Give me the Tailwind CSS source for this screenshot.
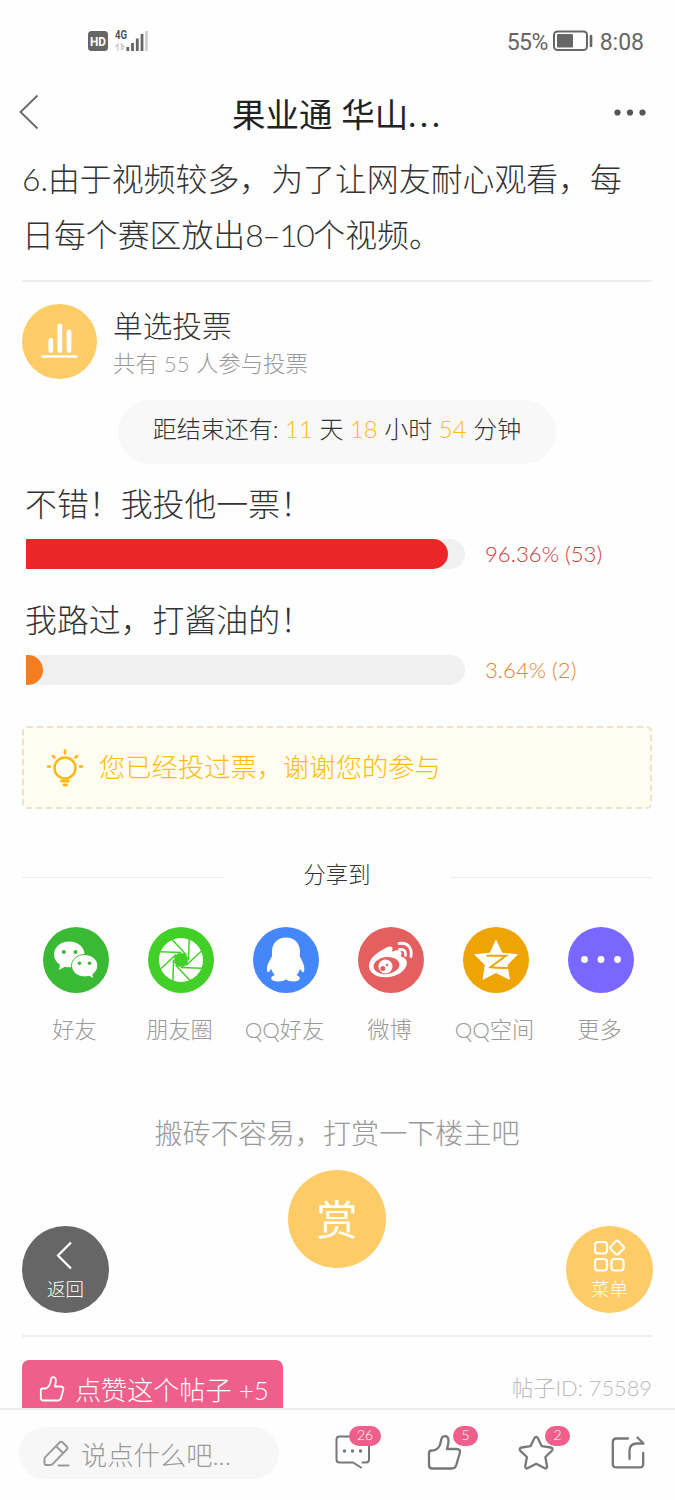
<!DOCTYPE html>
<html lang="zh-CN">
<head>
<meta charset="utf-8">
<meta name="viewport" content="width=device-width, initial-scale=1">
<title>果业通 华山</title>
<script src="https://cdn.jsdelivr.net/npm/@tailwindcss/browser@4"></script>
</head>
<body class="bg-[#fefefe]">
<div class="relative flex h-[1500px] w-[675px] flex-col overflow-hidden bg-[#fefefe] font-['Lato','Noto_Sans_CJK_SC',sans-serif] font-light text-[#333] whitespace-nowrap">

  <!-- status bar -->
  <div class="flex h-[82px] shrink-0 items-center justify-between pl-[87px] pr-[31px] text-[#666]">
    <svg class="h-[24px] w-[64px]" viewBox="87 29 64 24">
      <rect x="88" y="31" width="20" height="20" rx="3.5" fill="#666"/>
      <text x="98" y="46" text-anchor="middle" font-family="Roboto" font-weight="700" font-size="13" fill="#fff" textLength="16" lengthAdjust="spacingAndGlyphs">HD</text>
      <text x="115" y="39.200" font-family="Roboto" font-weight="700" font-size="12" fill="#555" textLength="12" lengthAdjust="spacingAndGlyphs">4G</text>
      <path d="M115.500 47l2.500-3v7M121.500 43v7M121.500 44l2.500 3-2.500 3" fill="none" stroke="#ccc" stroke-width="1.300"/>
      <path d="M127.800 47v4M132.500 43v8M137.300 38.500v12.500M142 34v17" stroke="#666" stroke-width="2.800"/>
      <path d="M146.500 31v20" stroke="#d0d0d0" stroke-width="2.800"/>
    </svg>
    <div class="flex items-center font-['Roboto',sans-serif] text-[23px] font-normal leading-none">
      <span class="mt-[2px] tracking-[-0.6px]">55%</span>
      <svg class="ml-[5px] h-[22px] w-[40px]" viewBox="553 30 40 22">
        <rect x="554" y="31.500" width="33" height="18.500" rx="3.500" fill="none" stroke="#666" stroke-width="2"/>
        <rect x="557" y="34" width="16" height="13.500" rx="1" fill="#666"/>
        <path d="M591 36v10" stroke="#666" stroke-width="2.600" stroke-linecap="round"/>
      </svg>
      <span class="ml-[7px] mt-[2px]">8:08</span>
    </div>
  </div>

  <!-- title bar -->
  <header class="flex h-[69px] shrink-0 items-start justify-between pl-[18px] pr-[28px]">
    <svg class="mt-[12px] h-[36px] w-[36px]" viewBox="18 94 36 36"><path d="M37.500 95.500L20.500 112l17 16.500" fill="none" stroke="#666" stroke-width="1.800"/></svg>
    <h1 class="ml-[9px] mt-[7px] text-[33.500px] font-normal leading-[50px] text-[#222]">果业通 华山<span class="tracking-[4px]">...</span></h1>
    <svg class="mt-[25px] h-[10px] w-[34px]" viewBox="613 107 34 10" fill="#555"><circle cx="617.500" cy="112.500" r="3.100"/><circle cx="630" cy="112.500" r="3.100"/><circle cx="642.500" cy="112.500" r="3.100"/></svg>
  </header>

  <main class="flex h-[1257px] shrink-0 flex-col overflow-hidden pl-[22px] pr-[23px]">
    <p class="h-[129px] shrink-0 text-[31.900px] leading-[56px]">6.由于视频较多，为了让网友耐心观看，每<br>日每个赛区放出<span class="tracking-[-1.5px]">8–10</span>个视频。</p>
    <div class="h-[2px] shrink-0 bg-[#eee]"></div>

    <!-- vote heading -->
    <div class="mt-[22px] flex h-[75px] shrink-0">
      <svg class="h-[75px] w-[75px]" viewBox="22.500 304.500 75 75"><circle cx="60" cy="342" r="37.500" fill="#fdcc66"/><path d="M43 357h34" stroke="#fff" stroke-width="2.600" stroke-linecap="round"/><path d="M51.300 341v10M60.300 326.500v24.500M69.500 332.500v18.500" stroke="#fff" stroke-width="4.800" stroke-linecap="round"/></svg>
      <div class="ml-[16px]">
        <div class="mt-[2px] text-[29.700px] leading-[40px]">单选投票</div>
        <div class="mt-[3px] text-[22.400px] leading-[30px] text-[#999]">共有 55 人参与投票</div>
      </div>
    </div>
    <div class="mt-[21px] flex h-[64px] w-[438px] shrink-0 justify-center self-center rounded-full bg-[#f8f8f8] text-[24px] leading-[58px]">
      <span>距结束还有: <b class="font-light text-[#fb1]">11</b> 天 <b class="font-light text-[#fb1]">18</b> 小时 <b class="font-light text-[#fb1]">54</b> 分钟</span>
    </div>

    <!-- poll options -->
    <div class="mt-[15px] h-[60px] shrink-0 pl-[3px] text-[31.900px] leading-[50px]">不错！我投他一票！</div>
    <div class="flex h-[30px] shrink-0 items-center pl-[4px]">
      <div class="h-[30px] w-[439px] overflow-hidden rounded-r-full bg-[#f0f0f0]"><div class="h-full rounded-r-full bg-[#ea2726]" style="width:96.2%"></div></div>
      <span class="ml-[20px] text-[22.200px] leading-[30px] text-[#cf3838]">96.36% (53)</span>
    </div>
    <div class="mt-[26px] h-[60px] shrink-0 pl-[3px] text-[31.900px] leading-[50px]">我路过，打酱油的！</div>
    <div class="flex h-[30px] shrink-0 items-center pl-[4px]">
      <div class="h-[30px] w-[439px] overflow-hidden rounded-r-full bg-[#f0f0f0]"><div class="h-full rounded-r-full bg-[#f57d20]" style="width:3.9%"></div></div>
      <span class="ml-[20px] text-[22.200px] leading-[30px] text-[#df852f]">3.64% (2)</span>
    </div>

    <!-- notice -->
    <div class="mt-[41px] flex h-[83px] shrink-0 items-center rounded-[5px] border-2 border-dashed border-[#e8e3cc] bg-[#fffdef] pl-[21px] text-[#fb1]">
      <svg class="h-[40px] w-[40px]" viewBox="46 748 40 40" fill="none" stroke="#fdb813" stroke-width="2.500" stroke-linecap="round"><circle cx="66" cy="768" r="10.500"/><path d="M66 750.500v3M54 756l1.500 1.500M78 756l-1.500 1.500M49 766.500h2M81 766.500h2"/><path d="M62.500 781h7M65 785h2.500" stroke-width="2.800"/></svg>
      <span class="-mt-[1px] ml-[14px] text-[26.300px] leading-[40px]">您已经投过票，谢谢您的参与</span>
    </div>

    <!-- share -->
    <div class="mt-[50px] flex h-[32px] shrink-0 items-center justify-between text-[22.300px] leading-[32px]">
      <i class="mt-[5px] h-px w-[202px] bg-[#eee]"></i><span>分享到</span><i class="mt-[5px] h-px w-[202px] bg-[#eee]"></i>
    </div>
    <div class="mt-[36px] grid shrink-0 grid-cols-6 text-center text-[22.200px] leading-[32px] text-[#999]">
      <div class="flex flex-col items-center gap-[21px]">
        <svg class="ml-[2px] h-[66px] w-[66px]" viewBox="43 927 66 66"><circle cx="76" cy="960" r="33" fill="#3ab935"/><path d="M69 941.500c-8.500 0-15 5.800-15 13 0 4.300 2.300 7.800 6 10.200l-1 5.300 6-3.300c1.500.4 3 .5 5 .5 8 0 14.500-5.700 14.500-12.700 0-7.200-6.500-13-15.500-13z" fill="#fff"/><path d="M84.500 954.500c-7.200 0-13 5-13 11.200s5.800 11.200 13 11.200c1.500 0 3-.2 4.500-.6l4.800 2.400-1-4.300c3-2.200 5-5.200 5-8.700 0-6.200-6-11.200-13.300-11.200z" fill="#fff" stroke="#3ab935" stroke-width="1"/><g fill="#3ab935"><circle cx="63.800" cy="952" r="2"/><circle cx="75.500" cy="952" r="2"/><circle cx="79.500" cy="963.200" r="1.800"/><circle cx="89.500" cy="963.200" r="1.800"/></g></svg>
        <span>好友</span>
      </div>
      <div class="flex flex-col items-center gap-[21px]">
        <svg class="ml-[2px] h-[66px] w-[66px]" viewBox="-33 -33 66 66"><circle r="33" fill="#42cf28"/><circle r="22" fill="#fff"/><path d="M-3-6.700L3-6.700 6.700-3 6.700 3 3 6.700-3 6.700-6.700 3-6.700-3z" fill="#42cf28"/><g stroke="#42cf28" stroke-width="1.500"><path d="M5.500-5L-9-20.500"/><path d="M5.500-5L-9-20.500" transform="rotate(45)"/><path d="M5.500-5L-9-20.500" transform="rotate(90)"/><path d="M5.500-5L-9-20.500" transform="rotate(135)"/><path d="M5.500-5L-9-20.500" transform="rotate(180)"/><path d="M5.500-5L-9-20.500" transform="rotate(225)"/><path d="M5.500-5L-9-20.500" transform="rotate(270)"/><path d="M5.500-5L-9-20.500" transform="rotate(315)"/></g></svg>
        <span>朋友圈</span>
      </div>
      <div class="flex flex-col items-center gap-[21px]">
        <svg class="ml-[2px] h-[66px] w-[66px]" viewBox="253 927 66 66"><circle cx="286" cy="960" r="33" fill="#4487fb"/><path d="M286 937.500c-8.500 0-14 6-14 14 0 2 .3 3.500-.2 5-2.300 4.500-5.300 8.500-4.800 13.500.2 2 .7 2.500 1.500 2 1.300-.7 2-2 2.700-3.300.8 2.600 2 4.600 3.600 6.200-2.300.7-3.800 2-3.600 3.700.3 3.600 11.500 3.800 14.800 1 3.300 2.800 13.500 2.600 13.800-1 .2-1.700-1.200-3-3.300-3.700 1.600-1.600 2.800-3.600 3.600-6.200.7 1.300 1.400 2.600 2.600 3.300.8.500 1.500 0 1.600-2 .5-5-2.300-9-4.300-13.500-.5-1.500 0-3 0-5 0-8-5.500-14-14-14z" fill="#fff"/></svg>
        <span>QQ好友</span>
      </div>
      <div class="flex flex-col items-center gap-[21px]">
        <svg class="ml-[2px] h-[66px] w-[66px]" viewBox="358 927 66 66"><circle cx="391" cy="960" r="33" fill="#e35f60"/><path d="M384 949c4-3 8-3.500 8.500-.8.200 1.300-.3 2.400-.8 3.600 3-1.300 7-2.300 9-.5 1.500 1.500.8 3.200.2 5.200 4 1.200 6.200 3.500 6 6.800-.5 7-9 13.500-20 14-10.500.5-18-4.300-18-11.500 0-6 7-13 15.100-16.800z" fill="#fff"/><ellipse cx="386.500" cy="965.500" rx="13" ry="8.500" transform="rotate(-7 386.500 965.500)" fill="#e35f60"/><circle cx="385.500" cy="966.500" r="7" fill="#fff"/><circle cx="382.800" cy="968.500" r="2.500" fill="#e35f60"/><circle cx="387" cy="965" r="1.200" fill="#e35f60"/><path d="M399 943.500c8-1.500 13.500 4 12 13M399.500 949.500c4.500-.8 6.800 2 6 6" fill="none" stroke="#fff" stroke-width="2.800" stroke-linecap="round"/></svg>
        <span>微博</span>
      </div>
      <div class="flex flex-col items-center gap-[21px]">
        <svg class="ml-[2px] h-[66px] w-[66px]" viewBox="463 927 66 66"><circle cx="496" cy="960" r="33" fill="#eda404"/><path d="M496 939.500l6.300 13.300 15.700 1.500-10.500 10.700 2.500 15-14-7-13.500 7 2.300-15-10.800-10.700 15.800-1.500z" fill="#fff"/><path d="M486.500 955.800h19.500l-15.500 11.400c6 .8 12 1 21.500.6" fill="none" stroke="#eda404" stroke-width="1.900"/></svg>
        <span>QQ空间</span>
      </div>
      <div class="flex flex-col items-center gap-[21px]">
        <svg class="ml-[2px] h-[66px] w-[66px]" viewBox="568 927 66 66"><circle cx="601" cy="960" r="33" fill="#7968ff"/><g fill="#fff"><circle cx="584.500" cy="959.500" r="3.400"/><circle cx="601" cy="959.500" r="3.400"/><circle cx="617.500" cy="959.500" r="3.400"/></g></svg>
        <span>更多</span>
      </div>
    </div>

    <!-- reward -->
    <p class="mt-[67px] h-[57px] shrink-0 text-center text-[28.100px] leading-[40px] text-[#999]">搬砖不容易，打赏一下楼主吧</p>
    <div class="flex size-[98px] shrink-0 items-center justify-center self-center rounded-full bg-[#fdcc66] text-[41px] font-normal leading-none text-white">赏</div>
    <div class="mt-[67px] h-[2px] shrink-0 bg-[#eee]"></div>

    <div class="mt-[23px] flex h-[62px] shrink-0 justify-between">
      <div class="flex h-[62px] w-[261px] rounded-[7px] bg-[#ee5f8b] text-[26.100px] leading-[60px] text-white">
        <svg class="ml-[17px] mt-[15px] h-[28px] w-[26px]" viewBox="39 1375 26 28" fill="none" stroke="#fff" stroke-width="1.800" stroke-linejoin="round"><path d="M42.500 1388.500h3.500c3-1.500 4.500-4.500 4.800-8.500.2-3.500 4.800-4 5-.3.200 2.500-.3 4.800-1 6.800h6c2 0 2.900 1.300 2.500 3l-2.300 8.500c-.5 1.700-1.500 2.500-3.200 2.500H43.500c-1.800 0-2.700-.8-2.700-2.500v-7.800c0-1.200.6-1.700 1.700-1.700z"/></svg>
        <span class="ml-[10px]">点赞这个帖子 +5</span>
      </div>
      <span class="text-[21.800px] leading-[56px] text-[#bbb]">帖子ID: 75589</span>
    </div>
  </main>

  <!-- bottom toolbar -->
  <footer class="flex h-[92px] shrink-0 items-start border-t-2 border-[#ececec] bg-[#fefefe] pl-[19px] text-[#999]">
    <div class="mt-[17px] flex h-[52px] w-[260px] items-center rounded-full bg-[#f7f7f7] text-[26.300px]">
      <svg class="ml-[23px] h-[30px] w-[30px]" viewBox="42 1438 30 30" fill="none" stroke="#999" stroke-width="1.900" stroke-linecap="round" stroke-linejoin="round"><path d="M59.500 1442.500c1-1 2.200-1 3.200 0l4 4c1 1 1 2 0 3l-14 14.500c-.8.800-1.500 1-2.500 1h-4c-1.200 0-1.700-.5-1.700-1.700v-4c0-1 .3-1.800 1-2.500zM56.500 1446.500l6.500 6.500M58.500 1465.500h10"/></svg>
      <span class="ml-[9px] mt-[4px] leading-[50px]">说点什么吧...</span>
    </div>
    <div class="relative ml-[54px] mt-[22px]">
      <svg class="h-[42px] w-[42px]" viewBox="333 1432 42 42" fill="none" stroke="#777" stroke-width="2" stroke-linecap="round" stroke-linejoin="round"><path d="M362.500 1462.500h3.500c2 0 3-1 3-3v-20c0-2-1-3-3-3h-26.500c-2 0-3 1-3 3v20c0 2 1 3 3 3h13.500l8 5"/><g fill="#777" stroke="none"><circle cx="344.500" cy="1451" r="1.700"/><circle cx="352.500" cy="1451" r="1.700"/><circle cx="360.500" cy="1451" r="1.700"/></g></svg>
      <span class="absolute left-[16px] top-[-6px] h-[20px] w-[32px] rounded-full bg-[#ee5f8b] text-center text-[14px] leading-[18px] text-white">26</span>
    </div>
    <div class="relative ml-[50px] mt-[22px]">
      <svg class="h-[42px] w-[42px]" viewBox="425 1432 42 42" fill="none" stroke="#777" stroke-width="2.300" stroke-linejoin="round"><path d="M431.500 1450.500c5 .5 8.500-3.500 9.500-9.500.5-6.500 7.500-6.500 7.500-.5 0 3.500-.7 6-1.500 8.500h9.500c3 0 4 1.500 3.300 4l-3.500 12c-.8 2.500-2 3.500-4.500 3.500h-19.500c-2.300 0-3.300-1-3.300-3.300v-12c0-1.900.7-2.700 2.500-2.700z"/></svg>
      <span class="absolute left-[28px] top-[-6px] h-[20px] w-[25px] rounded-full bg-[#ee5f8b] text-center text-[14px] leading-[18px] text-white">5</span>
    </div>
    <div class="relative ml-[50px] mt-[22px]">
      <svg class="h-[42px] w-[42px]" viewBox="517 1432 42 42" fill="none" stroke="#777" stroke-width="2.300" stroke-linejoin="round"><path d="M534.500 1438c.9-1.600 2.500-1.600 3.300 0l4 8.200 9 1.300c1.900.3 2.400 1.900 1 3.300l-6.400 6.200 1.600 9c.3 2-1 2.900-2.700 2l-8.100-4.200-8.200 4.200c-1.700.9-3 0-2.700-2l1.600-9-6.500-6.200c-1.300-1.400-.8-3 1.100-3.300l9-1.300z"/></svg>
      <span class="absolute left-[28px] top-[-6px] h-[20px] w-[25px] rounded-full bg-[#ee5f8b] text-center text-[14px] leading-[18px] text-white">2</span>
    </div>
    <svg class="ml-[50px] mt-[22px] h-[42px] w-[42px]" viewBox="609 1432 42 42" fill="none" stroke="#777" stroke-width="2.300" stroke-linecap="round" stroke-linejoin="round"><path d="M628 1438.500h-11.500c-2.500 0-3.700 1.200-3.700 3.700v21.500c0 2.500 1.200 3.700 3.700 3.700h23c2.500 0 3.700-1.200 3.700-3.700V1453M629.500 1459v-8c0-5 2.500-7.500 7.500-7.500h6.500l-6-6"/></svg>
  </footer>

  <!-- floating buttons -->
  <div class="absolute left-[22px] top-[1226px] flex size-[87px] flex-col items-center rounded-full bg-[#666] text-[18.500px] leading-[26px] text-white">
    <svg class="mt-[14px] h-[30px] w-[20px]" viewBox="56 1240 20 30" fill="none" stroke="#fff" stroke-width="2.200"><path d="M71 1242.500L58 1255.500l13 13"/></svg>
    <span class="mt-[6px]">返回</span>
  </div>
  <div class="absolute left-[566px] top-[1226px] flex size-[87px] flex-col items-center rounded-full bg-[#fdcc66] text-[18.500px] leading-[26px] text-white">
    <svg class="mt-[12px] h-[36px] w-[36px]" viewBox="592 1238 36 36" fill="none" stroke="#fff" stroke-width="2.200"><rect x="595" y="1242" width="12" height="11.500" rx="3"/><rect x="595" y="1259" width="12" height="11.500" rx="3"/><rect x="611.500" y="1259" width="12" height="11.500" rx="3"/><rect x="611.700" y="1242.300" width="10.800" height="10.800" rx="1.800" transform="rotate(45 617.100 1247.700)"/></svg>
    <span class="mt-[2px]">菜单</span>
  </div>
</div>
</body>
</html>
